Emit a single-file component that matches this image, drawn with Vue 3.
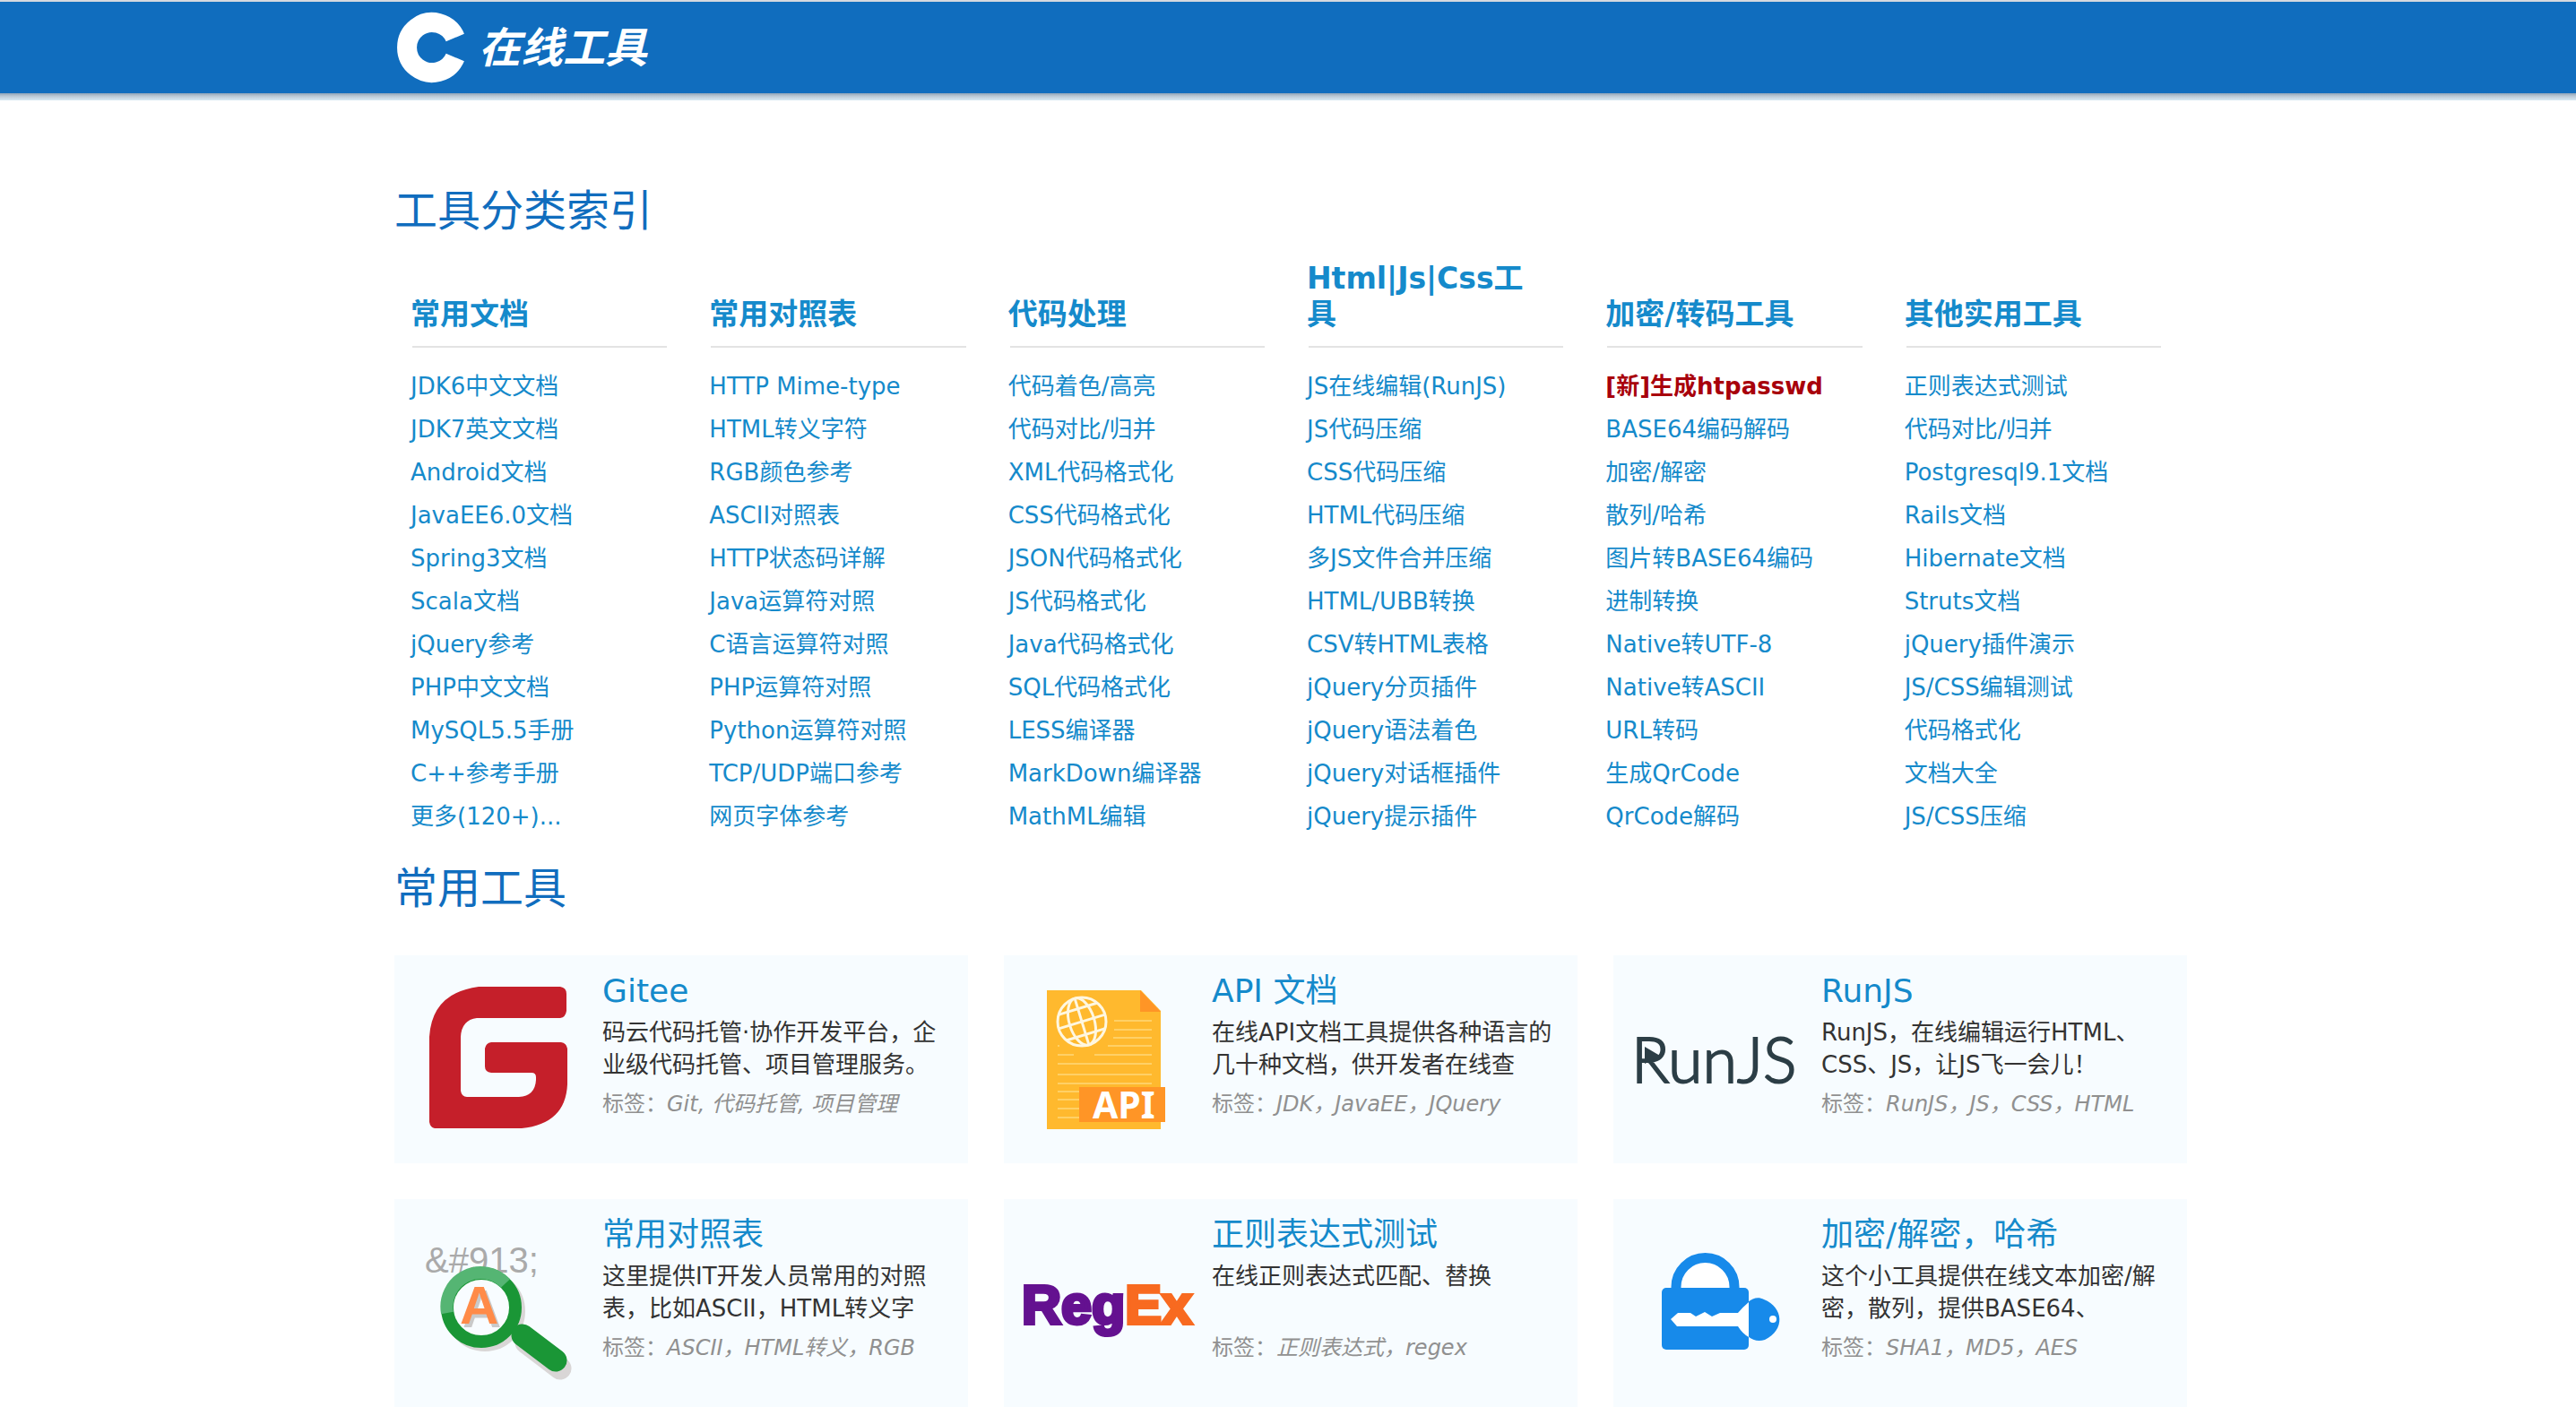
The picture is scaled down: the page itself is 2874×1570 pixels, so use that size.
<script setup>
const categories = [
  { title: '常用文档', links: ['JDK6中文文档', 'JDK7英文文档', 'Android文档', 'JavaEE6.0文档', 'Spring3文档', 'Scala文档', 'jQuery参考', 'PHP中文文档', 'MySQL5.5手册', 'C++参考手册', '更多(120+)...'] },
  { title: '常用对照表', links: ['HTTP Mime-type', 'HTML转义字符', 'RGB颜色参考', 'ASCII对照表', 'HTTP状态码详解', 'Java运算符对照', 'C语言运算符对照', 'PHP运算符对照', 'Python运算符对照', 'TCP/UDP端口参考', '网页字体参考'] },
  { title: '代码处理', links: ['代码着色/高亮', '代码对比/归并', 'XML代码格式化', 'CSS代码格式化', 'JSON代码格式化', 'JS代码格式化', 'Java代码格式化', 'SQL代码格式化', 'LESS编译器', 'MarkDown编译器', 'MathML编辑'] },
  { title: 'Html|Js|Css工具', links: ['JS在线编辑(RunJS)', 'JS代码压缩', 'CSS代码压缩', 'HTML代码压缩', '多JS文件合并压缩', 'HTML/UBB转换', 'CSV转HTML表格', 'jQuery分页插件', 'jQuery语法着色', 'jQuery对话框插件', 'jQuery提示插件'] },
  { title: '加密/转码工具', hot: '[新]生成htpasswd', links: ['[新]生成htpasswd', 'BASE64编码解码', '加密/解密', '散列/哈希', '图片转BASE64编码', '进制转换', 'Native转UTF-8', 'Native转ASCII', 'URL转码', '生成QrCode', 'QrCode解码'] },
  { title: '其他实用工具', links: ['正则表达式测试', '代码对比/归并', 'Postgresql9.1文档', 'Rails文档', 'Hibernate文档', 'Struts文档', 'jQuery插件演示', 'JS/CSS编辑测试', '代码格式化', '文档大全', 'JS/CSS压缩'] },
]

const tools = [
  { icon: 'gitee', title: 'Gitee', desc: '码云代码托管·协作开发平台，企业级代码托管、项目管理服务。', tags: 'Git, 代码托管, 项目管理' },
  { icon: 'api', title: 'API 文档', desc: '在线API文档工具提供各种语言的几十种文档，供开发者在线查', tags: 'JDK，JavaEE，JQuery' },
  { icon: 'runjs', title: 'RunJS', desc: 'RunJS，在线编辑运行HTML、CSS、JS，让JS飞一会儿！', tags: 'RunJS，JS，CSS，HTML' },
  { icon: 'table', title: '常用对照表', desc: '这里提供IT开发人员常用的对照表，比如ASCII，HTML转义字', tags: 'ASCII，HTML转义，RGB' },
  { icon: 'regex', title: '正则表达式测试', desc: '在线正则表达式匹配、替换', tags: '正则表达式，regex' },
  { icon: 'lock', title: '加密/解密，哈希', desc: '这个小工具提供在线文本加密/解密，散列，提供BASE64、', tags: 'SHA1，MD5，AES' },
]
</script>

<template>
  <div class="page">
    <header class="topbar">
      <div class="container">
        <a class="brand" href="#">
          <svg width="80" height="80" viewBox="0 0 80 80" aria-hidden="true">
            <path d="M65.8 29A28 28 0 1 0 65.8 51" fill="none" stroke="#fff" stroke-width="22" />
          </svg>
          <span>在线工具</span>
        </a>
      </div>
    </header>

    <main class="container">
      <h1 class="section-title">工具分类索引</h1>
      <div class="index">
        <section v-for="c in categories" :key="c.title" class="category">
          <h2>{{ c.title }}</h2>
          <ul>
            <li v-for="l in c.links" :key="l"><a href="#" :class="{ hot: l === c.hot }">{{ l }}</a></li>
          </ul>
        </section>
      </div>

      <h1 class="section-title tools-title">常用工具</h1>
      <div class="cards">
        <article v-for="t in tools" :key="t.title" class="card">
          <svg class="icon" viewBox="0 0 232 232" aria-hidden="true">
            <path v-if="t.icon === 'gitee'" fill="#c51f2a" d="M94 35h91q7 1 7 8v19q-1 7-7 8H92q-17 2-18 21v60q1 7 7 7h58q18-1 19-19v-3q0-5-5-5h-45q-7-1-7-7V104q1-6 7-7h78q6 1 7 7v40q-2 44-51 49H45q-5-1-6-7V91q3-49 55-56Z" />

            <g v-else-if="t.icon === 'api'">
              <path fill="#ffb92e" d="M48 39h105l22 23v132H48Z" />
              <path fill="#ff9526" d="M152 39l23 24h-23Z" />
              <path stroke="#ffd066" stroke-width="2" d="M123 73h42M123 83h42M122 92h43M60 101h2M116 101h49M60 111h18M101 111h64M60 121h105M60 133h105M60 143h105M60 152h24M60 161h24M60 171h24M60 181h24" />
              <g fill="none" stroke="#fff7e0" stroke-width="3">
                <circle cx="87" cy="74" r="27" />
                <g transform="rotate(-17 87 74)">
                  <ellipse cx="87" cy="74" rx="14" ry="27" />
                  <path d="M87 47v54M60 74h54M65 59h44M65 89h44" />
                </g>
              </g>
              <path fill="#ff9526" d="M84 147h96v39H84Z" />
              <text x="99" y="182" class="api-text">API</text>
            </g>

            <g v-else-if="t.icon === 'runjs'">
              <text x="20" y="142" class="runjs-text">RunJS</text>
              <path fill="#2c3e46" d="M35 102l17 10-17 9Z" />
            </g>

            <g v-else-if="t.icon === 'table'">
              <text x="34" y="82" class="entity-text">&amp;#913;</text>
              <g fill="none" stroke="#d9d6d6">
                <circle cx="101" cy="125" r="38" stroke-width="14" />
                <path d="M147 160l38 29" stroke-width="25" stroke-linecap="round" />
              </g>
              <circle cx="97" cy="121" r="32" fill="#f8fcff" />
              <text x="73" y="139" class="glass-text">A</text>
              <g fill="none" stroke="#1a9636">
                <circle cx="97" cy="121" r="38" stroke-width="14" />
                <path d="M143 152l37 28" stroke-width="25" stroke-linecap="round" />
              </g>
              <path d="M59 127a38 38 0 0 1 65-33" fill="none" stroke="#55b573" stroke-width="14" />
            </g>

            <text v-else-if="t.icon === 'regex'" x="20" y="139" class="regex-text"><tspan>Reg</tspan><tspan class="regex-ex">Ex</tspan></text>

            <g v-else>
              <path fill="#fff" d="M74 102v-4a28 28 0 0 1 56 0v4Z" />
              <path fill="none" stroke="#178aea" stroke-width="11" d="M70 104v-6a32 32 0 0 1 65 0v6" />
              <rect x="54" y="99" width="97" height="69" rx="5" fill="#178aea" />
              <path fill="#178aea" d="M150 115c6-5 12-6 18-3 22 9 24 34 1 45-7 2-13 1-19-4Z" />
              <path fill="#fff" d="M151 115v39q-7-4-12-12H71l-7-8 8-7h14l6 4 10-5 8 5 9-4h20q6-7 12-12Z" />
              <circle cx="178" cy="134" r="4" fill="#fff" />
            </g>
          </svg>
          <div class="info">
            <h3><a href="#">{{ t.title }}</a></h3>
            <p class="desc">{{ t.desc }}</p>
            <p class="tags">标签：<i>{{ t.tags }}</i></p>
          </div>
        </article>
      </div>
    </main>
  </div>
</template>

<style>
body {
  margin: 0;
  background: #fff;
}
</style>

<style scoped>
.page {
  font-family: "DejaVu Sans", "Noto Sans CJK SC", sans-serif;
  font-size: 26px;
  color: #333;
  padding-left: 6px;
}
h1, h2, h3, p, ul {
  margin: 0;
  padding: 0;
}
a {
  color: #158acb;
  text-decoration: none;
}
.container {
  max-width: 2000px;
  margin: 0 auto;
}
.topbar {
  margin-left: -6px;
  padding-left: 6px;
  border-top: 2px solid #d5d9df;
  background: #106dbe;
  position: relative;
}
.topbar::after {
  content: "";
  position: absolute;
  left: 0;
  right: 0;
  top: 100%;
  height: 8px;
  background: linear-gradient(#8ea3b8, #b9c8d5 40%, #d8eaf4);
}
.brand {
  display: flex;
  align-items: center;
  gap: 12px;
  height: 102px;
  padding-left: 2px;
  color: #fff;
  font-size: 47px;
  font-weight: 700;
  font-style: italic;
}
.brand span {
  padding-bottom: 8px;
}
.section-title {
  font-size: 48px;
  line-height: 64px;
  font-weight: 400;
  color: #106dbe;
  padding-top: 99px;
}
.index {
  display: grid;
  grid-template-columns: repeat(6, 1fr);
  align-items: end;
  padding-top: 24px;
}
.category {
  padding: 0 29px 0 18px;
}
.category h2 {
  font-size: 33px;
  line-height: 40px;
  color: #158acb;
  padding: 0 16px 17px 0;
  background: linear-gradient(#e3e3e3, #e3e3e3) 2px 100% / 100% 2px no-repeat;
  margin-bottom: 19px;
  overflow-wrap: anywhere;
}
.category ul {
  list-style: none;
}
.category li {
  line-height: 48px;
  white-space: nowrap;
}
.category .hot {
  color: #a8000b;
  font-weight: 700;
}
.tools-title {
  padding-top: 24px;
}
.cards {
  display: grid;
  grid-template-columns: repeat(3, 1fr);
  gap: 40px;
  padding-top: 43px;
}
.card {
  display: flex;
  background: #f7fcff;
  height: 232px;
}
.icon {
  flex: none;
  width: 232px;
  height: 232px;
}
.info {
  flex: 1;
  min-width: 0;
  padding: 16px 22px 0 0;
}
.info h3 {
  font-size: 36px;
  line-height: 48px;
  font-weight: 400;
  padding-bottom: 4px;
}
.desc {
  line-height: 36px;
  height: 72px;
  overflow: hidden;
}
.tags {
  font-size: 24px;
  line-height: 36px;
  padding-top: 8px;
  color: #909090;
}
.api-text {
  font: 700 41px "Noto Sans", sans-serif;
  fill: #fff;
}
.runjs-text {
  font: 300 70px Lato, sans-serif;
  fill: #2c3e46;
  stroke: #2c3e46;
  stroke-width: 2px;
}
.entity-text {
  font: 400 40px "Liberation Sans", sans-serif;
  fill: #aaa;
}
.glass-text {
  font: 700 60px "Liberation Sans", sans-serif;
  fill: #ff8b48;
  filter: drop-shadow(3px 4px 0 #c9c9c9);
}
.regex-text {
  font: 700 61px "Liberation Sans", sans-serif;
  fill: #641190;
  stroke: #641190;
  stroke-width: 4px;
}
.regex-ex {
  fill: #f86a20;
  stroke: #f86a20;
}
</style>
